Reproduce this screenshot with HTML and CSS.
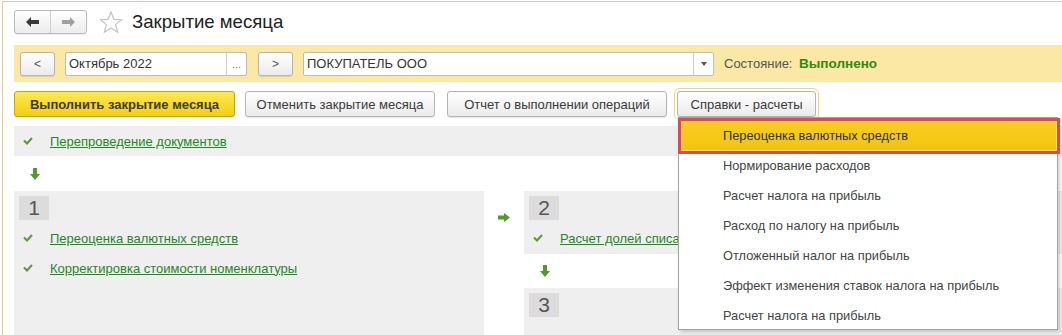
FILE: index.html
```html
<!DOCTYPE html>
<html>
<head>
    <title>Закрытие месяца</title>
    <link rel="stylesheet" href="styles.css">
</head>
<body>
    <div class="frame">
        <div class="header">
            <div class="nav">
                <button class="nav-btn">
                    <svg width="13" height="10" viewBox="0 0 13 10"><path d="M0 5L5 0v3h8v4H5v3z" fill="#3a3a3a"/></svg>
                </button>
                <button class="nav-btn">
                    <svg width="13" height="10" viewBox="0 0 13 10"><path d="M13 5L8 0v3H0v4h8v3z" fill="#a0a0a0"/></svg>
                </button>
            </div>
            <svg class="star" width="24" height="23" viewBox="0 0 24 23">
                <polygon points="12,1 14.9,8.3 22.6,8.7 16.6,13.6 18.6,21.2 12,17 5.4,21.2 7.4,13.6 1.4,8.7 9.1,8.3" fill="none" stroke="#c4c4c4" stroke-width="1.2"/>
            </svg>
            <h1>Закрытие месяца</h1>
        </div>

        <div class="filter-bar">
            <button class="btn small">&lt;</button>
            <div class="field date">
                <span class="value">Октябрь 2022</span>
                <span class="field-btn">...</span>
            </div>
            <button class="btn small">&gt;</button>
            <div class="field org">
                <span class="value">ПОКУПАТЕЛЬ ООО</span>
                <span class="field-btn">
                    <svg width="6" height="4" viewBox="0 0 6 4"><path d="M0 0h6L3 4z" fill="#555"/></svg>
                </span>
            </div>
            <div class="state">Состояние: <b>Выполнено</b></div>
        </div>

        <div class="actions">
            <button class="btn primary">Выполнить закрытие месяца</button>
            <button class="btn cancel">Отменить закрытие месяца</button>
            <button class="btn report">Отчет о выполнении операций</button>
            <button class="btn focused">Справки - расчеты</button>
        </div>

        <div class="band">
            <div class="op">
                <svg class="check" width="10" height="8" viewBox="0 0 10 8"><polyline points="1,3.5 4,6.5 9,1" fill="none" stroke="#5a9b2f" stroke-width="2"/></svg>
                <a href="#">Перепроведение документов</a>
            </div>
        </div>

        <div class="arrow-row">
            <svg width="10" height="12" viewBox="0 0 10 12"><path d="M3 0h4v6h3l-5 6-5-6h3z" fill="#4e9a2b"/></svg>
        </div>

        <div class="stages">
            <div class="stage first">
                <div class="num">1</div>
                <div class="op">
                    <svg class="check" width="10" height="8" viewBox="0 0 10 8"><polyline points="1,3.5 4,6.5 9,1" fill="none" stroke="#5a9b2f" stroke-width="2"/></svg>
                    <a href="#">Переоценка валютных средств</a>
                </div>
                <div class="op">
                    <svg class="check" width="10" height="8" viewBox="0 0 10 8"><polyline points="1,3.5 4,6.5 9,1" fill="none" stroke="#5a9b2f" stroke-width="2"/></svg>
                    <a href="#">Корректировка стоимости номенклатуры</a>
                </div>
            </div>
            <div class="side-arrow">
                <svg width="12" height="9" viewBox="0 0 12 9"><path d="M0 2.5h6V0l6 4.5L6 9V6.5H0z" fill="#4e9a2b"/></svg>
            </div>
            <div class="column">
                <div class="stage">
                    <div class="num">2</div>
                    <div class="op">
                        <svg class="check" width="10" height="8" viewBox="0 0 10 8"><polyline points="1,3.5 4,6.5 9,1" fill="none" stroke="#5a9b2f" stroke-width="2"/></svg>
                        <a href="#">Расчет долей списания косвенных расходов</a>
                    </div>
                </div>
                <div class="arrow-row inner">
                    <svg width="10" height="12" viewBox="0 0 10 12"><path d="M3 0h4v6h3l-5 6-5-6h3z" fill="#4e9a2b"/></svg>
                </div>
                <div class="stage last">
                    <div class="num">3</div>
                </div>
            </div>
        </div>

        <div class="menu">
            <div class="menu-item active">Переоценка валютных средств</div>
            <div class="menu-item">Нормирование расходов</div>
            <div class="menu-item">Расчет налога на прибыль</div>
            <div class="menu-item">Расход по налогу на прибыль</div>
            <div class="menu-item">Отложенный налог на прибыль</div>
            <div class="menu-item">Эффект изменения ставок налога на прибыль</div>
            <div class="menu-item">Расчет налога на прибыль</div>
        </div>
    </div>
</body>
</html>
```

FILE: styles.css
```css
* {
    margin: 0;
    padding: 0;
    box-sizing: border-box;
}
html, body {
    height: 100%;
    overflow: hidden;
}
body {
    font-family: 'Liberation Sans', Arial, sans-serif;
    font-size: 13px;
    color: #404040;
    background: #fff;
}
.frame {
    position: relative;
    margin: 1px 0 0 2px;
    height: 334px;
    border-top: 1px solid #c9c9c9;
    border-left: 1px solid #e6d08a;
    padding-left: 11px;
    overflow: hidden;
}
.header {
    display: flex;
    align-items: center;
    height: 24px;
    margin-top: 8px;
}
.nav {
    display: flex;
    width: 73px;
    height: 24px;
    border: 1px solid #b9b9b9;
    border-radius: 3px;
    background: linear-gradient(#ffffff, #ececec);
    box-shadow: 0 1px 1px rgba(0,0,0,0.08);
}
.nav-btn {
    flex: 1;
    border: none;
    background: none;
    display: flex;
    align-items: center;
    justify-content: center;
}
.nav-btn + .nav-btn {
    border-left: 1px solid #cfcfcf;
}
.star {
    margin-left: 12px;
}
.header h1 {
    margin-left: 9px;
    font-size: 18.6px;
    font-weight: 400;
    color: #222;
}
.filter-bar {
    display: flex;
    align-items: center;
    height: 37px;
    margin-top: 11px;
    padding-left: 6px;
    background: #fbe8a5;
}
.btn {
    height: 26px;
    padding: 0;
    border: 1px solid #b4b4b4;
    border-radius: 3px;
    background: linear-gradient(#ffffff, #ebebeb);
    font-family: inherit;
    font-size: 13px;
    color: #3a3a3a;
    box-shadow: 0 1px 1px rgba(0,0,0,0.1);
}
.btn.small {
    width: 35px;
    height: 24px;
    font-size: 12px;
    color: #555;
}
.field {
    display: flex;
    height: 24px;
    margin: 0 11px 0 10px;
    border: 1px solid #bcbcbc;
    border-radius: 2px;
    background: #fff;
}
.field .value {
    flex: 1;
    padding-left: 3px;
    line-height: 22px;
    color: #333;
}
.field-btn {
    width: 20px;
    border-left: 1px solid #cfcfcf;
    display: flex;
    align-items: center;
    justify-content: center;
    font-size: 11px;
    color: #777;
}
.field.date {
    width: 182px;
}
.field.org {
    width: 411px;
    margin-right: 10px;
}
.state {
    color: #555;
}
.state b {
    margin-left: 3px;
    font-size: 13.5px;
    color: #2f8c12;
}
.actions {
    display: flex;
    align-items: center;
    margin-top: 9px;
}
.btn.primary {
    width: 221px;
    border-color: #c9a30b;
    background: linear-gradient(#fde952, #f3cf0c);
    font-weight: 700;
    color: #3b3b30;
}
.btn.cancel {
    width: 190px;
    margin-left: 10px;
}
.btn.report {
    width: 220px;
    margin-left: 12px;
}
.btn.focused {
    width: 139px;
    margin-left: 10px;
    outline: 1px solid #f0d47a;
    outline-offset: 2px;
}
.band {
    margin-top: 9px;
    height: 30px;
    background: #efefef;
    display: flex;
    align-items: center;
}
.op {
    display: flex;
    align-items: center;
    height: 30px;
    padding-left: 9px;
}
.check {
    margin-right: 17px;
}
.op a {
    color: #1d8a1d;
    text-decoration: underline;
    white-space: nowrap;
}
.arrow-row {
    height: 35px;
    display: flex;
    align-items: center;
    padding-left: 16px;
}
.stages {
    display: flex;
}
.stage {
    background: #efefef;
    padding: 5px 5px 0;
}
.stage.first {
    width: 470px;
    height: 150px;
}
.num {
    width: 30px;
    height: 24px;
    background: #dcdcdc;
    color: #555;
    font-size: 21px;
    line-height: 24px;
    text-align: center;
    margin-bottom: 3px;
}
.stage .op {
    padding-left: 4px;
}
.side-arrow {
    width: 40px;
    padding: 19px 0 0 14px;
}
.column {
    flex: 1;
}
.column .stage {
    height: 63px;
}
.column .stage.last {
    height: 60px;
}
.arrow-row.inner {
    height: 34px;
    padding-left: 16px;
}
.menu {
    position: absolute;
    left: 675px;
    top: 115px;
    width: 380px;
    height: 213px;
    padding-top: 3px;
    background: #fff;
    border: 1px solid #a3a3a3;
    box-shadow: 2px 2px 4px rgba(0,0,0,0.18);
}
.menu-item {
    height: 30px;
    line-height: 30px;
    padding-left: 44px;
    font-size: 12.8px;
    color: #444;
    white-space: nowrap;
}
.menu-item.active {
    margin-left: 2px;
    padding-left: 42px;
    background: linear-gradient(#f8ce22, #f3c30f);
    color: #333;
    outline: 3px solid #e4474c;
    box-shadow: inset 0 0 0 1px #fbe27a;
}
```
